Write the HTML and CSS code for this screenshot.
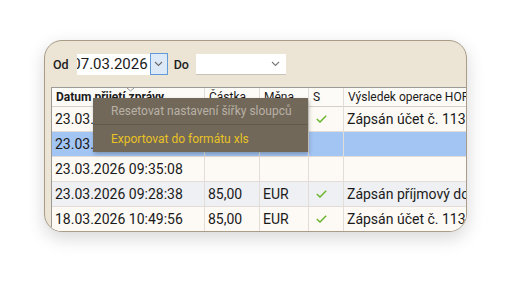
FILE: index.html
```html
<html lang="cs">
  <head>
    <meta name="viewport" content="width=device-width,initial-scale=1">
    <title>Přijaté zprávy</title>
    <link rel="stylesheet" href="styles.css">
  </head>
<body>
  <div class="card">
    <div class="toolbar">
      <span class="label">Od</span>
      <div class="date-box"><span>07.03.2026</span></div>
      <div class="drop-btn">
        <svg width="9" height="6" viewBox="0 0 9 6"><polyline points="1,1 4.5,4.5 8,1" fill="none" stroke="#6a6a6a" stroke-width="1.1"/></svg>
      </div>
      <span class="label to">Do</span>
      <div class="combo">
        <svg width="9" height="6" viewBox="0 0 9 6"><polyline points="1,1 4.5,4.5 8,1" fill="none" stroke="#7a7a7a" stroke-width="1.1"/></svg>
      </div>
    </div>

    <div class="grid">
      <div class="row head">
        <div class="cell bold">Datum přijetí zprávy
          <svg class="sort" width="9" height="5" viewBox="0 0 9 5"><polyline points="1,1 4.5,4 8,1" fill="none" stroke="#999" stroke-width="1"/></svg>
        </div>
        <div class="cell">Částka</div>
        <div class="cell">Měna</div>
        <div class="cell">S</div>
        <div class="cell">Výsledek operace HORIZON</div>
      </div>
      <div class="row">
        <div class="cell">23.03.2026 10:12:44</div>
        <div class="cell">85,00</div>
        <div class="cell">EUR</div>
        <div class="cell ok"><svg width="11" height="8" viewBox="0 0 11 8"><polyline points="0.8,4 4,7 10.2,0.8" fill="none" stroke="#6bb52c" stroke-width="1.5"/></svg></div>
        <div class="cell">Zápsán účet č. 113</div>
      </div>
      <div class="row selected">
        <div class="cell">23.03.2026 09:41:17</div>
        <div class="cell"></div>
        <div class="cell"></div>
        <div class="cell"></div>
        <div class="cell"></div>
      </div>
      <div class="row">
        <div class="cell">23.03.2026 09:35:08</div>
        <div class="cell"></div>
        <div class="cell"></div>
        <div class="cell"></div>
        <div class="cell"></div>
      </div>
      <div class="row alt">
        <div class="cell">23.03.2026 09:28:38</div>
        <div class="cell">85,00</div>
        <div class="cell">EUR</div>
        <div class="cell ok"><svg width="11" height="8" viewBox="0 0 11 8"><polyline points="0.8,4 4,7 10.2,0.8" fill="none" stroke="#6bb52c" stroke-width="1.5"/></svg></div>
        <div class="cell">Zápsán příjmový doklad</div>
      </div>
      <div class="row">
        <div class="cell">18.03.2026 10:49:56</div>
        <div class="cell">85,00</div>
        <div class="cell">EUR</div>
        <div class="cell ok"><svg width="11" height="8" viewBox="0 0 11 8"><polyline points="0.8,4 4,7 10.2,0.8" fill="none" stroke="#6bb52c" stroke-width="1.5"/></svg></div>
        <div class="cell">Zápsán účet č. 113</div>
      </div>
    </div>

    <div class="menu">
      <div class="menu-item disabled">Resetovat nastavení šířky sloupců</div>
      <div class="menu-sep"></div>
      <div class="menu-item active">Exportovat do formátu xls</div>
    </div>
  </div>
</body>
</html>
```

FILE: styles.css
```css
html, body {
  margin: 0;
  padding: 0;
  background: #fff;
  font-family: Roboto, "Liberation Sans", sans-serif;
}
.card {
  position: relative;
  margin: 40px 0 0 44px;
  width: 421px;
  height: 190px;
  border: 1px solid #a99d89;
  border-radius: 18px;
  background: #ece4d4;
  overflow: hidden;
  box-shadow: 0 6px 18px rgba(0, 0, 0, 0.16);
}
.toolbar {
  height: 46px;
  display: flex;
  align-items: center;
  padding-left: 8px;
  box-sizing: border-box;
}
.label {
  font-size: 12.5px;
  font-weight: 500;
  color: #1e1e1e;
  margin-right: 8px;
}
.label.to {
  margin-left: 6px;
  margin-right: 0;
  width: 22px;
}
.date-box {
  width: 73px;
  height: 21px;
  background: #fff;
  display: flex;
  justify-content: flex-end;
  align-items: center;
  overflow: hidden;
  font-size: 15px;
  color: #1a1a1a;
  white-space: nowrap;
}
.date-box span {
  margin-right: 2px;
}
.drop-btn {
  width: 16px;
  height: 20px;
  background: #dde9f7;
  border: 1px solid #5f9bd6;
  display: flex;
  align-items: center;
  justify-content: center;
}
.combo {
  width: 84px;
  height: 20px;
  background: #fff;
  border-bottom: 1px solid #c9c2b6;
  display: flex;
  align-items: center;
  justify-content: flex-end;
  padding-right: 6px;
}
.grid {
  margin-left: 6px;
  border-left: 1px solid #9c9a96;
  border-top: 1px solid #9c9a96;
  background: #fdf9f5;
  width: 520px;
}
.row {
  display: grid;
  grid-template-columns: 153px 55px 49px 35px 228px;
  height: 25px;
  background: #fdf9f5;
}
.row.head {
  height: 19px;
  background: #fdfbf8;
}
.row.selected {
  background: #a3c5f3;
}
.row.alt {
  background: #eff0f3;
}
.cell {
  position: relative;
  border-right: 1px solid #e2ddd6;
  border-bottom: 1px solid #e2ddd6;
  font-size: 14px;
  color: #1a1a1a;
  padding-left: 3px;
  display: flex;
  align-items: center;
  white-space: nowrap;
  overflow: hidden;
}
.head .cell {
  font-size: 12px;
  padding-left: 4px;
  border-bottom-color: #d4cfc7;
}
.head .bold {
  font-weight: 700;
  overflow: visible;
}
.sort {
  position: absolute;
  left: 74px;
  top: -1px;
}
.cell.ok {
  padding-left: 7px;
}
.menu {
  position: absolute;
  left: 48px;
  top: 57px;
  width: 215px;
  height: 54px;
  background: #71685a;
  box-shadow: 1px 2px 4px rgba(0, 0, 0, 0.25);
}
.menu-item {
  height: 26px;
  display: flex;
  align-items: center;
  padding-left: 18px;
  font-size: 12px;
  white-space: nowrap;
}
.menu-item.disabled {
  color: #b9b1a5;
}
.menu-item.active {
  color: #e9c224;
  height: 27px;
}
.menu-sep {
  height: 1px;
  background: #62594d;
}
```
